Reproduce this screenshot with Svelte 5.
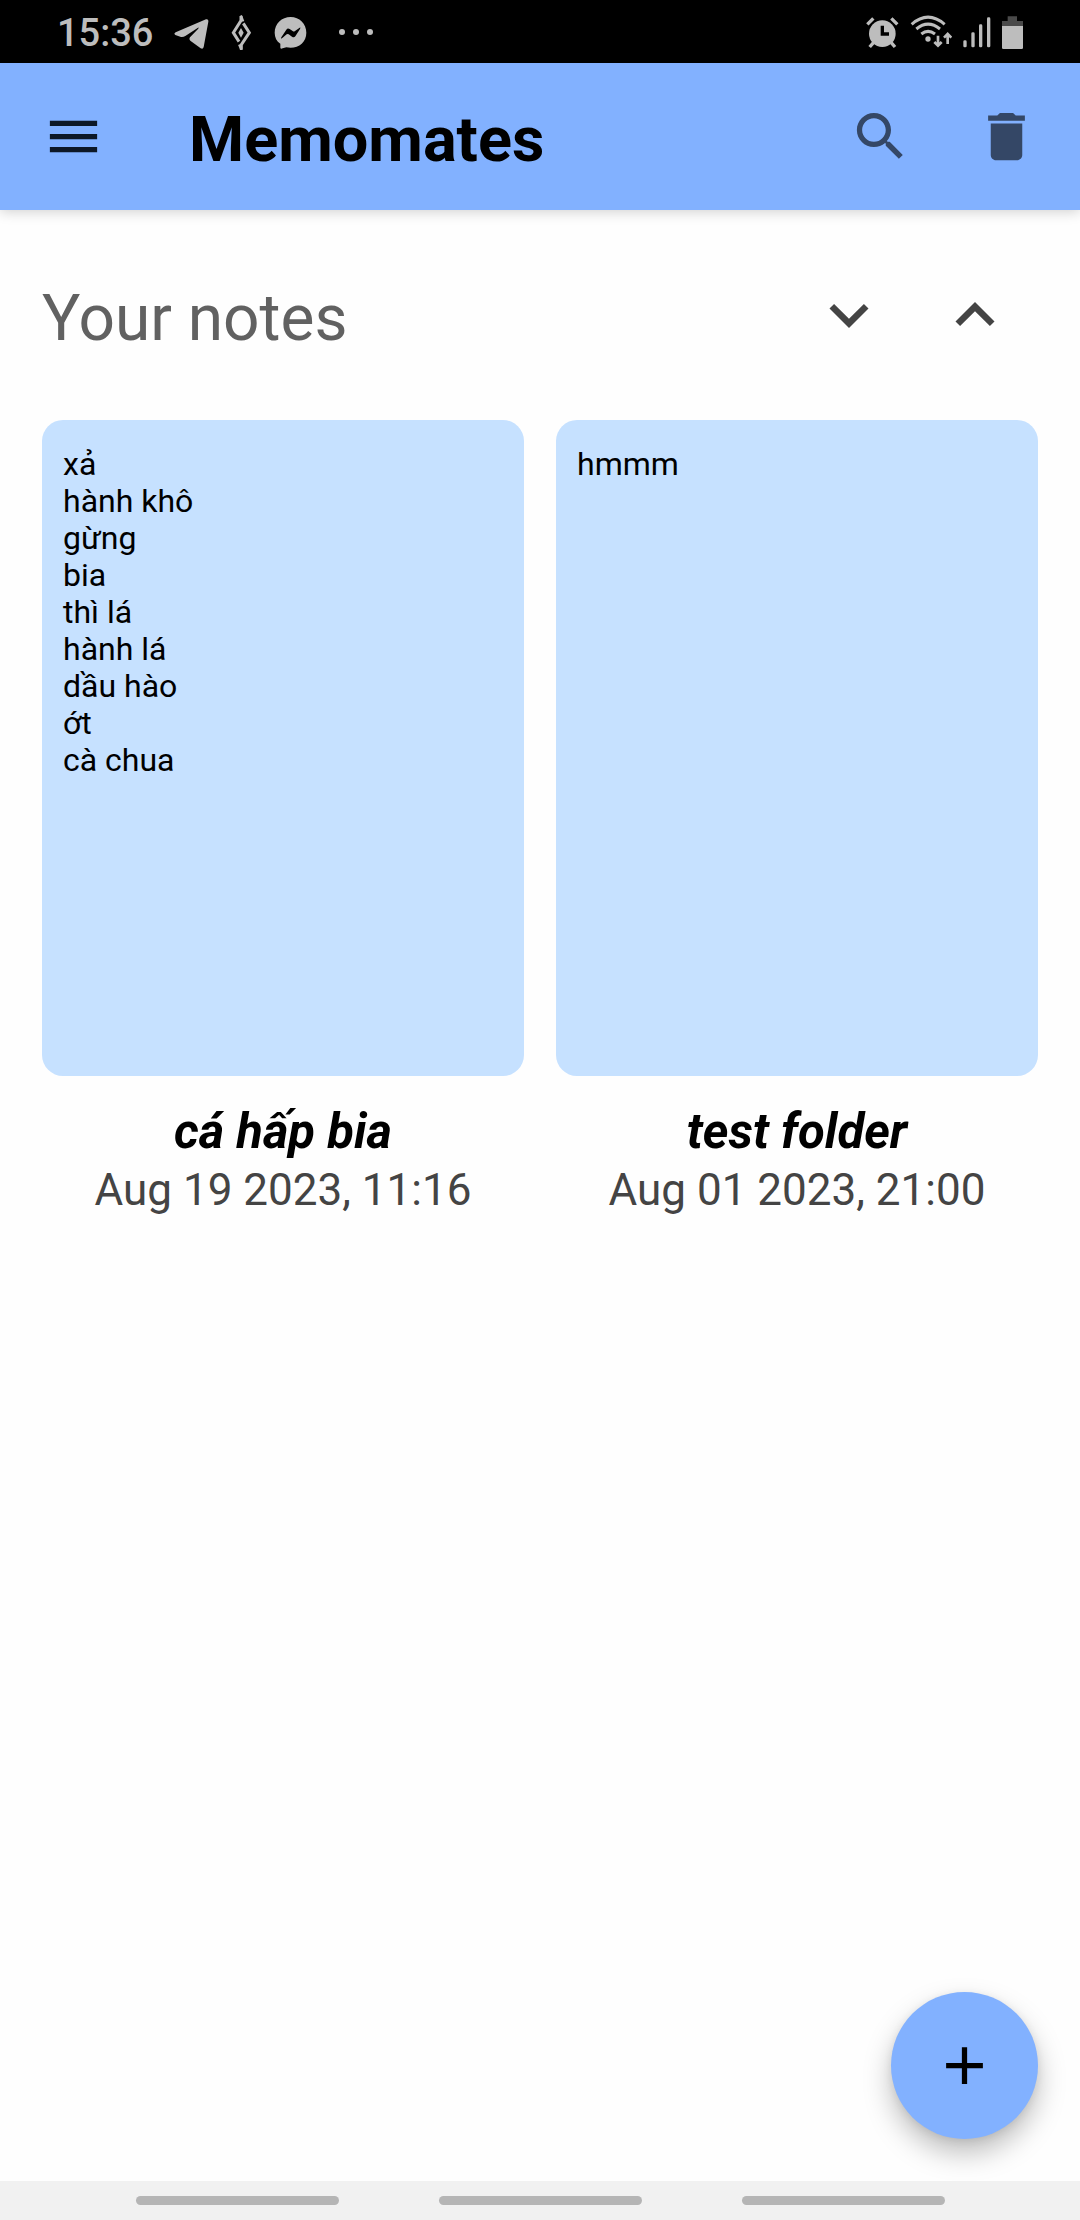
<script>
  const notes = [
    {
      title: 'cá hấp bia',
      date: 'Aug 19 2023, 11:16',
      body: 'xả\nhành khô\ngừng\nbia\nthì lá\nhành lá\ndầu hào\nớt\ncà chua'
    },
    { title: 'test folder', date: 'Aug 01 2023, 21:00', body: 'hmmm' }
  ];
</script>

<div class="screen">
  <div class="status">
    <div class="group left">
      <span class="clock">15:36</span>
      <svg width="35" height="37" viewBox="518 39 105 111" aria-hidden="true">
        <path d="M614 58 L523 97 Q516 101 522 105 L539 111 Q546 112 552 108 L590 83 Q594 82 590 87 L566 112 Q562 118 568 123 L598 145 Q605 149 607 141 L621 65 Q622 56 614 58Z" />
      </svg>
      <svg width="23" height="37" viewBox="686 39 69 111" aria-hidden="true">
        <g class="line" stroke-width="9">
          <path d="M719 48V62L696 98L713 125" />
          <path d="M720 149V134L744 98L726 70" />
          <path d="M719 46L726 64M720 150L713 134" stroke-width="6" />
        </g>
        <path d="M719 84L727 98L719 113L711 98Z" />
      </svg>
      <svg width="33" height="37" viewBox="820 39 99 111" aria-hidden="true">
        <path fill-rule="evenodd" d="M870 51C843 51 822 71 822 98C822 112 828 124 839 131V143Q840 148 846 145L857 142C889 149 917 129 917 98C917 71 896 51 870 51ZM842 112L857 89Q861 83 867 87L877 94Q879 95 882 94L897 83Q901 82 898 87L884 109Q880 114 874 110L864 103Q861 101 858 103L844 115Q839 117 842 112Z" />
      </svg>
      <svg width="46" height="37" viewBox="978 39 138 111" aria-hidden="true">
        <circle cx="1020" cy="96" r="9" /><circle cx="1062" cy="96" r="9" /><circle cx="1104" cy="96" r="9" />
      </svg>
    </div>
    <div class="group right">
      <svg width="33" height="37" viewBox="77 39 99 111" aria-hidden="true">
        <circle cx="126" cy="101" r="40" />
        <path class="line" stroke-width="10" d="M81 73L99 55M171 73L153 55M88 141L100 127M164 141L152 127" />
        <path d="M126 77V102H146" fill="none" stroke="#000" stroke-width="10" />
      </svg>
      <svg width="42" height="37" viewBox="211 39 126 111" aria-hidden="true">
        <g class="line" stroke-width="9">
          <path d="M216 73Q265 30 315 73" />
          <path d="M230 87Q265 58 301 87" />
          <path d="M245 102Q265 86 286 102" />
          <path stroke-width="8" d="M295 107V136M284 126L295 137L306 126M324 132V103M313 113L324 102L335 113" />
        </g>
        <circle cx="265" cy="117" r="8" />
      </svg>
      <svg width="28" height="37" viewBox="362 39 84 111" aria-hidden="true">
        <rect x="363" y="121" width="10" height="21" rx="4" /><rect x="387" y="97" width="10" height="45" rx="4" />
        <rect x="410" y="73" width="10" height="69" rx="4" /><rect x="434" y="52" width="10" height="90" rx="4" />
      </svg>
      <svg width="21" height="37" viewBox="486 39 63 111" aria-hidden="true">
        <path fill="#4a4a4a" d="M503 49H531V63H549V80H486V63H503Z" />
        <path d="M486 78H549V143Q549 147 545 147H490Q486 147 486 143Z" />
      </svg>
    </div>
  </div>

  <header class="appbar">
    <button class="menu" aria-label="Menu">
      <svg class="icon" viewBox="0 0 24 24"><path d="M3 18h18v-2H3v2zm0-5h18v-2H3v2zm0-7v2h18V6H3z" /></svg>
    </button>
    <h1>Memomates</h1>
    <button aria-label="Search">
      <svg class="icon" viewBox="0 0 24 24"><path d="M15.5 14h-.79l-.28-.27C15.41 12.59 16 11.11 16 9.5 16 5.91 13.09 3 9.5 3S3 5.91 3 9.5 5.91 16 9.5 16c1.61 0 3.09-.59 4.23-1.57l.27.28v.79l5 4.99L20.49 19l-4.99-5zm-6 0C7.01 14 5 11.99 5 9.5S7.01 5 9.5 5 14 7.01 14 9.5 11.99 14 9.5 14z" /></svg>
    </button>
    <button aria-label="Delete">
      <svg class="icon" viewBox="0 0 24 24"><path d="M6 19c0 1.1.9 2 2 2h8c1.1 0 2-.9 2-2V7H6v12zM19 4h-3.5l-1-1h-5l-1 1H5v2h14V4z" /></svg>
    </button>
  </header>

  <main>
    <div class="heading">
      <h2>Your notes</h2>
      <button aria-label="Sort descending">
        <svg class="chevron" viewBox="0 0 24 24"><path d="M16.59 8.59L12 13.17 7.41 8.59 6 10l6 6 6-6z" /></svg>
      </button>
      <button aria-label="Sort ascending">
        <svg class="chevron" viewBox="0 0 24 24"><path d="M12 8l-6 6 1.41 1.41L12 10.83l4.59 4.58L18 14z" /></svg>
      </button>
    </div>

    <div class="grid">
      {#each notes as note}
        <article>
          <div class="card">{note.body}</div>
          <h3>{note.title}</h3>
          <time>{note.date}</time>
        </article>
      {/each}
    </div>

    <button class="fab" aria-label="Add note">
      <svg class="icon" viewBox="0 0 24 24"><path d="M19 13h-6v6h-2v-6H5v-2h6V5h2v6h6v2z" /></svg>
    </button>
  </main>

  <div class="navbar"><span></span><span></span><span></span></div>
</div>

<style>
  :global(body) {
    margin: 0;
    background: #fefefe;
  }
  .screen {
    min-height: 100vh;
    display: flex;
    flex-direction: column;
    font-family: Roboto, 'Noto Sans', sans-serif;
    color: #000;
  }
  svg {
    display: block;
    flex: none;
  }
  button {
    display: block;
    padding: 0;
    border: 0;
    background: none;
    color: inherit;
    cursor: pointer;
  }
  h1,
  h2,
  h3 {
    margin: 0;
  }
  .icon {
    width: 63px;
    height: 63px;
    fill: currentColor;
  }
  .status {
    height: 63px;
    box-sizing: border-box;
    padding: 0 57px;
    display: flex;
    align-items: center;
    justify-content: space-between;
    background: #000;
    color: #bdbdbd;
    fill: #bdbdbd;
  }
  .group {
    display: flex;
    align-items: center;
  }
  .left {
    gap: 21px;
  }
  .right {
    gap: 11px;
  }
  .clock {
    font-size: 38px;
    line-height: 50px;
    padding-top: 3px;
    font-weight: 500;
  }
  .line {
    fill: none;
    stroke: #bdbdbd;
  }
  .appbar {
    height: 147px;
    box-sizing: border-box;
    padding: 0 42px;
    display: flex;
    align-items: center;
    gap: 63px;
    background: #82b1ff;
    color: #344766;
    box-shadow: 0 2px 12px rgba(0, 0, 0, 0.18);
  }
  .menu {
    color: #0d1826;
  }
  .appbar h1 {
    flex: 1;
    padding: 6px 0 0 21px;
    font-size: 63px;
    line-height: 74px;
    font-weight: 700;
    color: #000;
  }
  main {
    flex: 1;
    position: relative;
    padding: 66px 42px 0;
  }
  .heading {
    display: flex;
    align-items: flex-end;
    gap: 48px;
    padding-right: 24px;
    margin-bottom: 66px;
    color: #444;
  }
  .heading h2 {
    flex: 1;
    font-size: 64px;
    line-height: 70px;
    font-weight: 400;
    color: #616161;
  }
  .chevron {
    width: 78px;
    height: 78px;
    fill: currentColor;
  }
  .grid {
    display: grid;
    grid-template-columns: 1fr 1fr;
    gap: 32px;
  }
  article {
    text-align: center;
  }
  .card {
    min-height: 656px;
    box-sizing: border-box;
    padding: 26px 21px;
    border-radius: 21px;
    background: #c6e1ff;
    font-size: 32px;
    line-height: 37px;
    text-align: left;
    white-space: pre-line;
  }
  h3 {
    margin: 28px 0 7px;
    font-size: 49px;
    line-height: 55px;
    font-weight: 700;
    font-style: italic;
  }
  time {
    display: block;
    font-size: 44px;
    line-height: 49px;
    color: #444;
  }
  .fab {
    position: absolute;
    right: 42px;
    bottom: 42px;
    width: 147px;
    height: 147px;
    display: grid;
    place-items: center;
    border-radius: 50%;
    background: #82b1ff;
    color: #000;
    box-shadow: 0 14px 28px rgba(0, 0, 0, 0.26), 0 2px 8px rgba(0, 0, 0, 0.08);
  }
  .navbar {
    height: 39px;
    display: flex;
    align-items: center;
    justify-content: center;
    gap: 100px;
    background: #f1f1f1;
  }
  .navbar span {
    width: 203px;
    height: 9px;
    border-radius: 5px;
    background: #b5b5b5;
  }
</style>
